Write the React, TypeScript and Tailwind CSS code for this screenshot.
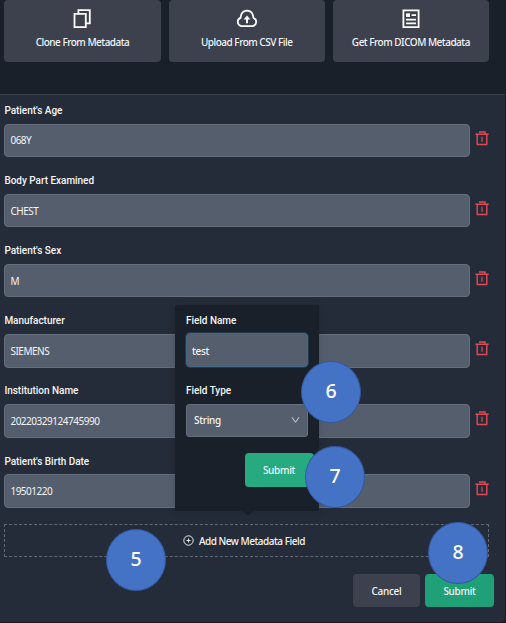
import React from "react";

const fields = [
  { label: "Patient's Age", value: "068Y" },
  { label: "Body Part Examined", value: "CHEST" },
  { label: "Patient's Sex", value: "M" },
  { label: "Manufacturer", value: "SIEMENS" },
  { label: "Institution Name", value: "20220329124745990" },
  { label: "Patient's Birth Date", value: "19501220" },
];

function CopyIcon() {
  return (
    <svg width="18" height="20" viewBox="0 0 18 20" fill="none" stroke="#fff" strokeWidth="1.8">
      <path d="M1.500 4.800h11.300v13.300H1.500z" />
      <path d="M5.400 4.800V1.200h11.400v13.200h-4" />
    </svg>
  );
}

function CloudIcon() {
  return (
    <svg width="22" height="20" viewBox="0 0 22 20" fill="none" stroke="#fff" strokeWidth="1.8">
      <path d="M5.2 17.1a4.3 4.3 0 0 1-.7-8.2C5 4.4 7.600 1.700 11 1.700s6 2.700 6.500 7.200a4.300 4.300 0 0 1-.7 8.200z" />
      <path d="M11 14.200V9.500" strokeWidth="2" />
      <path d="M7.600 10.400 11 6.500l3.400 3.900z" fill="#fff" stroke="none" />
    </svg>
  );
}

function DocumentIcon() {
  return (
    <svg width="18" height="20" viewBox="0 0 18 20" fill="none" stroke="#fff">
      <path d="M1.400 1.400h15.200v16.800H1.400z" strokeWidth="1.8" />
      <path d="M4 4.400h4v3.600H4z" fill="#fff" stroke="none" />
      <path d="M9.600 6.200H14M4 10.600h10M4 14.400h10" strokeWidth="1.8" />
    </svg>
  );
}

function TrashIcon() {
  return (
    <svg width="14" height="15" viewBox="0 0 14 15" fill="none" stroke="#e04a55">
      <path d="M.4 3.200h13.200M4 1h6v2" strokeWidth="1.400" />
      <path d="M2.200 3.200v10.300h9.600V3.200" strokeWidth="1.400" />
      <path d="M7 5.700v5" strokeWidth="1.200" />
    </svg>
  );
}

function Action({ icon, text }: { icon: React.ReactNode; text: string }) {
  return (
    <button className="flex h-[62px] w-[156.2px] flex-col items-center rounded-[4px] bg-[#3c414d] pt-[8.500px]">
      <span className="flex h-5 items-center">{icon}</span>
      <span className="mt-[6px] whitespace-nowrap text-[10px] leading-[14px] font-medium tracking-[-0.500px]">{text}</span>
    </button>
  );
}

function Step({ n, className }: { n: number; className: string }) {
  return (
    <div
      className={`absolute flex h-[62px] w-[60px] items-center justify-center rounded-[50%] border border-[#3459a0] bg-[#4472c4] pb-[2px] text-[19.500px] font-medium text-white ${className}`}
    >
      {n}
    </div>
  );
}

export default function App() {
  return (
    <div className="relative h-[623px] w-[506px] overflow-hidden bg-[#171d26] font-['Noto_Sans',sans-serif] text-[#f4f5f7]">
      <div className="h-[621.500px] w-[505px] rounded-br-[4px] bg-[#252c39]">
        <header className="flex h-[94px] items-start gap-[8px] bg-[#192029] pl-[4.400px]">
          <Action icon={<CopyIcon />} text="Clone From Metadata" />
          <Action icon={<CloudIcon />} text="Upload From CSV File" />
          <Action icon={<DocumentIcon />} text="Get From DICOM Metadata" />
        </header>
        <main className="border-t border-[#3b424e]">
          {fields.map((f) => (
            <div key={f.label} className="h-[70.150px] pl-[4.400px] pt-[8.800px]">
              <div className="h-[14px] font-['Roboto',sans-serif] text-[10px] leading-[14px] font-medium tracking-[-0.030px]">
                {f.label}
              </div>
              <div className="mt-[5.900px] flex gap-[5px]">
                <div className="flex h-[33.500px] w-[465.600px] items-center rounded-[4px] border border-[#656e7c] bg-[#555e6d] pl-[5px] text-[10px] tracking-[-0.480px]">
                  <span className="mt-px">{f.value}</span>
                </div>
                <span className="mt-[7px]">
                  <TrashIcon />
                </span>
              </div>
            </div>
          ))}
          <div className="ml-[4.400px] mt-[8px] flex h-[33.500px] w-[485px] items-center justify-center gap-[5px] border border-dashed border-[#626a76] pr-[6px] text-[10px] font-medium tracking-[-0.490px]">
            <svg width="11" height="11" viewBox="0 0 11 11" fill="none" stroke="#e8eaee" strokeWidth="1">
              <circle cx="5.500" cy="5.500" r="4.700" />
              <path d="M3.500 5.500h4M5.500 3.500v4" />
            </svg>
            <span className="mt-px">Add New Metadata Field</span>
          </div>
        </main>
        <footer className="mt-[16.500px] flex justify-end gap-[5px] pr-[11px] text-[10px] font-medium tracking-[-0.300px]">
          <button className="h-[33.500px] w-[67px] rounded-[4px] bg-[#3c414d] pt-px">Cancel</button>
          <button className="h-[33.500px] w-[69px] rounded-[4px] bg-[#20a077] pt-px">Submit</button>
        </footer>
      </div>

      <div className="absolute left-[175px] top-[305px] h-[206px] w-[144px] bg-[#192029] px-[11px] pt-[8.500px] shadow-[0_2px_8px_rgba(0,0,0,0.15)]">
        <div className="h-[14px] font-['Roboto',sans-serif] text-[10px] leading-[14px] font-medium tracking-[-0.030px]">Field Name</div>
        <div className="mt-[5.500px] flex h-[34px] items-center rounded-[4px] border border-[#426785] bg-[#555e6d] pl-[5px] text-[10px] font-medium tracking-[-0.300px] shadow-[0_0_0_1px_rgba(45,83,114,0.5)]">
          <span className="mt-[2px]">test</span>
        </div>
        <div className="mt-[16.500px] h-[14px] font-['Roboto',sans-serif] text-[10px] leading-[14px] font-medium tracking-[-0.030px]">
          Field Type
        </div>
        <div className="mt-[6px] flex h-[33.500px] items-center justify-between rounded-[3px] border border-[#656e7c] bg-[#555e6d] pl-[7px] pr-[7px] text-[10px] font-medium tracking-[-0.300px]">
          <span className="mt-px">String</span>
          <svg width="9" height="8" viewBox="0 0 9 8" fill="none" stroke="#d5d9df">
            <path d="m1 1.300 3.500 5L8 1.300" />
          </svg>
        </div>
        <button className="ml-[58.500px] mt-[16px] block h-[33.500px] w-[69px] rounded-[4px] bg-[#28aa80] pt-px text-[10px] font-medium tracking-[-0.300px]">
          Submit
        </button>
        <span className="absolute left-[67px] top-full h-[6px] w-[12px] bg-[#192029] [clip-path:polygon(0_0,100%_0,50%_80%)]" />
      </div>

      <Step n={5} className="left-[106px] top-[529px]" />
      <Step n={6} className="left-[301px] top-[361px]" />
      <Step n={7} className="left-[305px] top-[446px]" />
      <Step n={8} className="left-[428px] top-[522px]" />
    </div>
  );
}
